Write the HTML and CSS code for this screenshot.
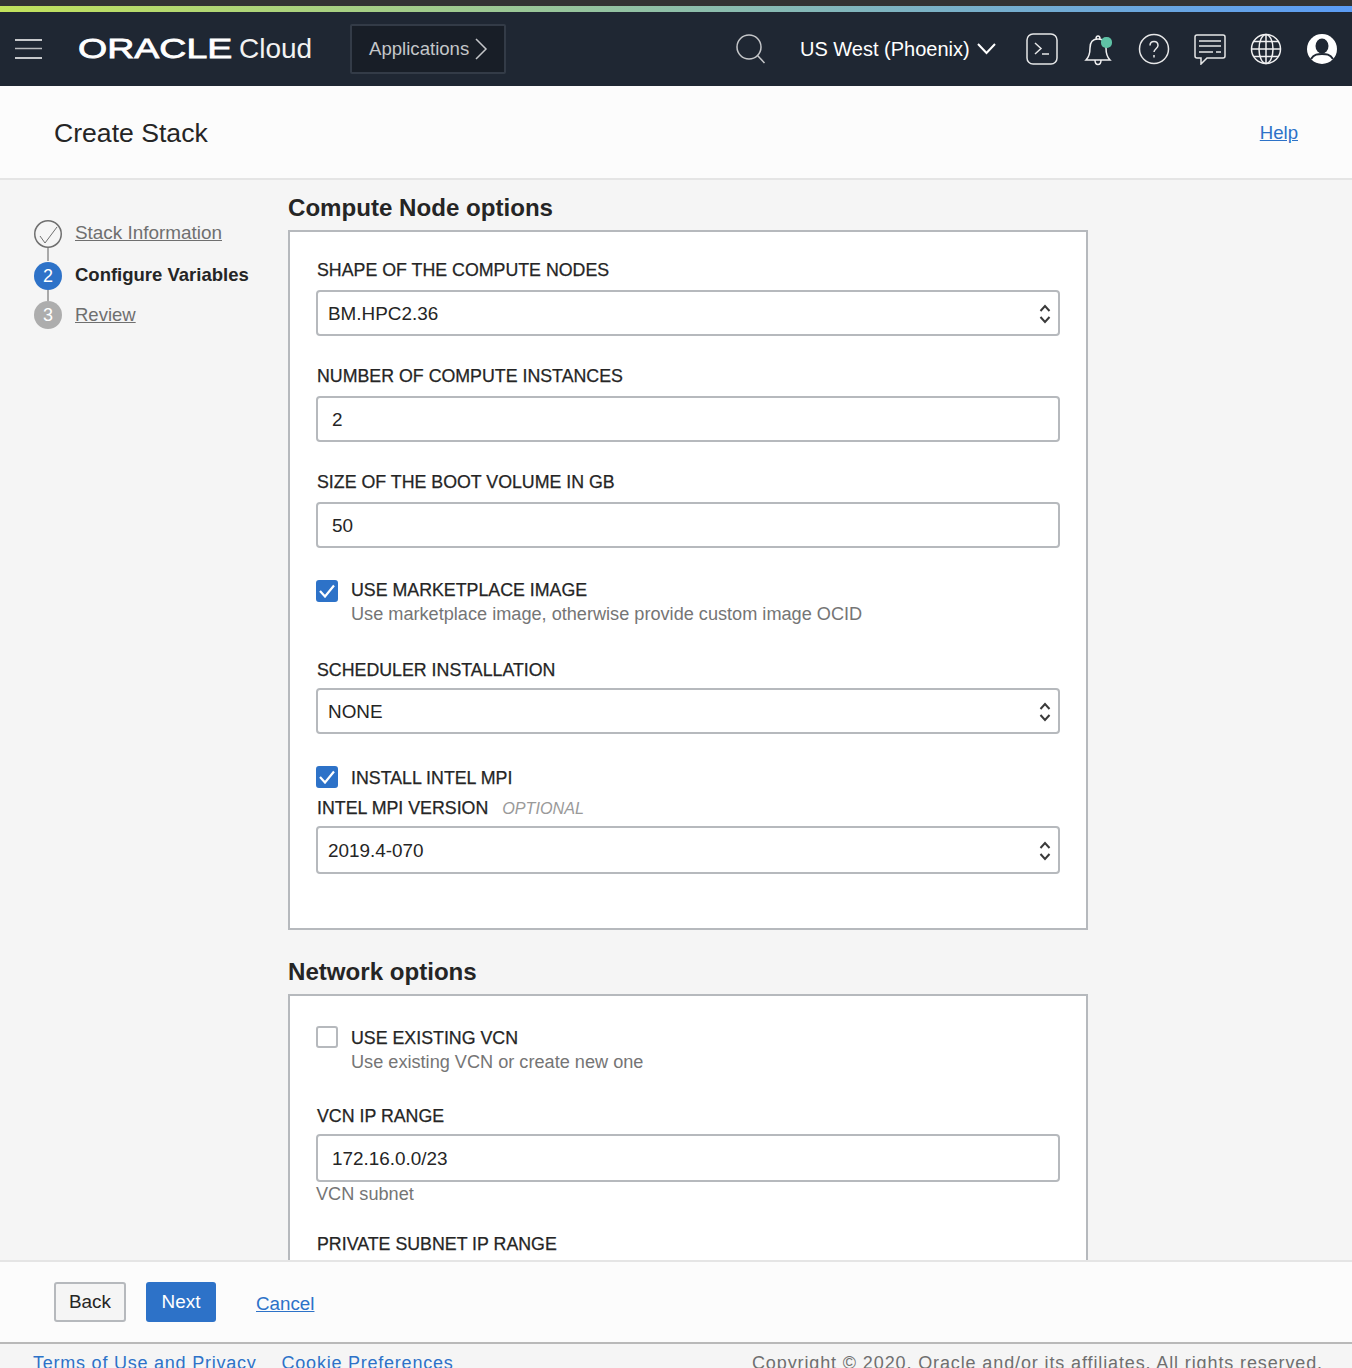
FILE: index.html
```html
<!DOCTYPE html>
<html lang="en">
<head>
  <meta charset="UTF-8">
  <title>Create Stack</title>
  <link rel="stylesheet" href="styles.css">
</head>
<body>

  <div class="top-strip"></div>

  <header class="navbar">
    <svg class="burger" width="27" height="20" viewBox="0 0 27 20">
      <path d="M0 1h27M0 19h27" stroke="#fff" stroke-width="1.5"/>
      <path d="M0 9.500h27" stroke="#b9bbbe" stroke-width="1.5"/>
    </svg>
    <div class="brand"><span class="brand-oracle">ORACLE</span><span class="brand-cloud">Cloud</span></div>
    <button class="apps-btn">Applications
      <svg width="13" height="22" viewBox="0 0 13 22"><path d="M1 1l10 10L1 21" fill="none" stroke="#c4c6c9" stroke-width="1.5"/></svg>
    </button>

    <svg class="nav-search" width="30" height="30" viewBox="0 0 30 30">
      <circle cx="13" cy="13" r="12" fill="none" stroke="#c4c6c9" stroke-width="1.5"/>
      <path d="M21.5 21.5l7 7.5" stroke="#c4c6c9" stroke-width="1.5"/>
    </svg>
    <div class="region">US West (Phoenix)
      <svg width="19" height="12" viewBox="0 0 19 12"><path d="M1 1l8.500 9L18 1" fill="none" stroke="#fff" stroke-width="2"/></svg>
    </div>
    <div class="nav-icons">
      <svg width="32" height="32" viewBox="0 0 32 32">
        <rect x="1" y="1" width="30" height="30" rx="6" fill="none" stroke="#e6e7e8" stroke-width="1.500"/>
        <path d="M9 10l6 5.500L9 21M16 21h7" fill="none" stroke="#e6e7e8" stroke-width="1.500"/>
      </svg>
      <svg class="nav-bell" width="30" height="34" viewBox="0 0 30 34">
        <path d="M2 28c3-3 4-6 4-12 0-6 3-9 8-9s8 3 8 9c0 6 1 9 4 12zM11 28c0 6 6 6 6 0M12 7c0-4 4-4 4 0" fill="none" stroke="#f0f0f1" stroke-width="1.500"/>
        <rect x="17" y="5" width="11" height="11" rx="5" fill="#5fc2a6"/>
      </svg>
      <svg width="32" height="32" viewBox="0 0 32 32">
        <circle cx="16" cy="16" r="14.500" fill="none" stroke="#e6e7e8" stroke-width="1.500"/>
        <path d="M12 12.500c0-5.500 8-5.500 8 0 0 3-4 3.500-4 6.500M16 22v2.500" fill="none" stroke="#e6e7e8" stroke-width="1.500"/>
      </svg>
      <svg width="32" height="32" viewBox="0 0 32 32">
        <path d="M3 2h26a2 2 0 0 1 2 2v19a2 2 0 0 1-2 2H13l-6 6v-6H3a2 2 0 0 1-2-2V4a2 2 0 0 1 2-2z" fill="none" stroke="#e6e7e8" stroke-width="1.500"/>
        <path d="M5 8h22M5 13h22M5 19h14M22 19h5" stroke="#e6e7e8" stroke-width="1.500"/>
      </svg>
      <svg width="32" height="32" viewBox="0 0 32 32">
        <g fill="none" stroke="#f0f0f1" stroke-width="1.500">
          <circle cx="16" cy="16" r="14.500"/>
          <ellipse cx="16" cy="16" rx="7" ry="14.500"/>
          <path d="M16 1.500v29M1.500 16h29M4 8.500h24M4 23.500h24"/>
        </g>
      </svg>
      <svg width="30" height="32" viewBox="0 0 30 32">
        <circle cx="15" cy="16" r="15" fill="#fff"/>
        <ellipse cx="15" cy="13" rx="6.500" ry="7.500" fill="#1f2733"/>
        <path d="M4 26c3-5 7-5 11-5s8 0 11 5" fill="none" stroke="#1f2733" stroke-width="2"/>
      </svg>
    </div>
  </header>

  <div class="title-bar">
    <h1>Create Stack</h1>
    <a class="help-link" href="#">Help</a>
  </div>

  <div class="main">
    <nav class="steps">
      <div class="step">
        <svg class="step-done" width="28" height="28" viewBox="0 0 28 28">
          <circle cx="14" cy="14" r="13.250" fill="none" stroke="#6f6f6f" stroke-width="1.500"/>
          <path d="M6 16l5 7L23 7" fill="none" stroke="#6f6f6f" stroke-width="1"/>
        </svg>
        <a class="step-first-link" href="#">Stack Information</a>
      </div>
      <div class="step step-current">
        <span class="step-num num-blue">2</span>
        <strong>Configure Variables</strong>
      </div>
      <div class="step step-last">
        <span class="step-num num-grey">3</span>
        <a href="#">Review</a>
      </div>
    </nav>

    <div class="content">
      <h2>Compute Node options</h2>
      <section class="card card-compute">
        <label>SHAPE OF THE COMPUTE NODES</label>
        <div class="select">BM.HPC2.36
          <svg width="12" height="20" viewBox="0 0 12 20"><path d="M1.500 7l4.500-5 4.500 5M1.500 13l4.500 5 4.500-5" fill="none" stroke="#3a3a3a" stroke-width="2"/></svg>
        </div>

        <label class="mt">NUMBER OF COMPUTE INSTANCES</label>
        <div class="input">2</div>

        <label class="mt">SIZE OF THE BOOT VOLUME IN GB</label>
        <div class="input">50</div>

        <div class="check-row row-marketplace">
          <span class="check on"><svg width="16" height="14" viewBox="0 0 16 14"><path d="M1 7l5 5.500L15 1.500" fill="none" stroke="#fff" stroke-width="2.200"/></svg></span>
          <div>
            <div class="check-label">USE MARKETPLACE IMAGE</div>
            <div class="hint">Use marketplace image, otherwise provide custom image OCID</div>
          </div>
        </div>

        <label class="label-sched">SCHEDULER INSTALLATION</label>
        <div class="select">NONE
          <svg width="12" height="20" viewBox="0 0 12 20"><path d="M1.500 7l4.500-5 4.500 5M1.500 13l4.500 5 4.500-5" fill="none" stroke="#3a3a3a" stroke-width="2"/></svg>
        </div>

        <div class="check-row row-mpi">
          <span class="check on check-up"><svg width="16" height="14" viewBox="0 0 16 14"><path d="M1 7l5 5.500L15 1.500" fill="none" stroke="#fff" stroke-width="2.200"/></svg></span>
          <div class="check-label">INSTALL INTEL MPI</div>
        </div>

        <label class="label-version">INTEL MPI VERSION <em>OPTIONAL</em></label>
        <div class="select select-tall">2019.4-070
          <svg width="12" height="20" viewBox="0 0 12 20"><path d="M1.500 7l4.500-5 4.500 5M1.500 13l4.500 5 4.500-5" fill="none" stroke="#3a3a3a" stroke-width="2"/></svg>
        </div>
      </section>

      <h2 class="h2-network">Network options</h2>
      <section class="card card-network">
        <div class="check-row row-vcn">
          <span class="check check-up"></span>
          <div>
            <div class="check-label">USE EXISTING VCN</div>
            <div class="hint">Use existing VCN or create new one</div>
          </div>
        </div>

        <label class="label-range">VCN IP RANGE</label>
        <div class="input input-range">172.16.0.0/23</div>
        <div class="hint hint-subnet">VCN subnet</div>

        <label class="label-private">PRIVATE SUBNET IP RANGE</label>
      </section>
    </div>
  </div>

  <div class="action-bar">
    <button class="btn btn-back">Back</button>
    <button class="btn btn-next">Next</button>
    <a class="cancel" href="#">Cancel</a>
  </div>

  <footer class="footer">
    <a href="#">Terms of Use and Privacy</a>
    <a href="#">Cookie Preferences</a>
    <span class="copyright">Copyright © 2020, Oracle and/or its affiliates. All rights reserved.</span>
  </footer>

</body>
</html>
```

FILE: styles.css
```css
* {
  box-sizing: border-box;
}
html, body {
  height: 100%;
}
body {
  margin: 0;
  height: 1368px;
  overflow: hidden;
  display: flex;
  flex-direction: column;
  font-family: "Liberation Sans", Arial, sans-serif;
  font-size: 18px;
  color: #252525;
  background-color: #f5f5f5;
}
a {
  color: #2d72c8;
}

.top-strip {
  flex: none;
  height: 12px;
  border-top: 6px solid #333;
  background: linear-gradient(to right, #c2e25c, #5b9cf5);
}

.navbar {
  flex: none;
  height: 74px;
  display: flex;
  align-items: center;
  background-color: #1f2733;
  color: #fff;
}
.burger {
  margin-left: 15px;
}
.brand {
  width: 272px;
  margin-left: 36px;
  display: flex;
  align-items: center;
  white-space: nowrap;
}
.brand-oracle {
  display: inline-block;
  width: 161px;
  font-size: 28px;
  -webkit-text-stroke: 0.8px #fff;
  transform: scaleX(1.34);
  transform-origin: left center;
}
.brand-cloud {
  font-size: 28px;
  color: #f2f2f2;
}
.apps-btn {
  width: 156px;
  height: 50px;
  padding: 0 0 0 17px;
  display: flex;
  align-items: center;
  gap: 6px;
  font-family: inherit;
  font-size: 18.600px;
  color: #c4c6c9;
  background-color: #181e27;
  border: 2px solid #333b47;
  border-radius: 2px;
}
.nav-search {
  margin-left: 230px;
}
.region {
  width: 214px;
  margin-left: 34px;
  display: flex;
  align-items: center;
  gap: 7px;
  font-size: 20px;
}
.nav-icons {
  display: grid;
  grid-template-columns: repeat(6, 56px);
  align-items: center;
  justify-items: center;
}
.nav-bell {
  margin-left: 1px;
}

.title-bar {
  flex: none;
  height: 94px;
  padding: 2px 54px 0 54px;
  display: flex;
  align-items: center;
  justify-content: space-between;
  background-color: #fcfcfc;
  border-bottom: 2px solid #e5e5e5;
}
.title-bar h1 {
  margin: 0;
  font-size: 26.600px;
  font-weight: normal;
}
.help-link {
  font-size: 18.600px;
}

.main {
  flex: 1;
  min-height: 0;
  overflow: hidden;
  display: flex;
}
.steps {
  flex: none;
  width: 288px;
  padding: 40px 0 0 34px;
}
.step {
  position: relative;
  height: 41px;
  display: flex;
  align-items: flex-start;
  gap: 13px;
  font-size: 18.500px;
  line-height: 26px;
}
.step a {
  color: #6f6f6f;
}
.step .step-first-link {
  font-size: 18.900px;
}
.step::after {
  content: "";
  position: absolute;
  left: 13px;
  top: 28px;
  width: 2px;
  height: 13px;
  background-color: #a9a9a9;
}
.step-last::after {
  display: none;
}
.step-current {
  height: 39px;
  margin-top: 1px;
}
.step-current::after {
  height: 11px;
}
.step-last {
  line-height: 28px;
}
.step-num {
  width: 28px;
  height: 28px;
  border-radius: 50%;
  flex: none;
  text-align: center;
  color: #fff;
  font-size: 18px;
  line-height: 28px;
}
.num-blue {
  background-color: #2d72c8;
}
.num-grey {
  background-color: #adadad;
}

.content {
  flex: none;
  width: 800px;
}
.content h2 {
  margin: 0;
  height: 50px;
  padding-top: 12px;
  font-size: 24.100px;
  line-height: 32px;
  font-weight: bold;
}
.content .h2-network {
  height: 64px;
  padding-top: 26px;
}
.card {
  padding: 28px 26px 0;
  background-color: #fff;
  border: 2px solid #b6b9bd;
}
.card-compute {
  height: 700px;
}
.card-network {
  height: 400px;
  padding-top: 32px;
}
.card label,
.check-label {
  display: block;
  padding-left: 1px;
  font-size: 17.800px;
  line-height: 20px;
  color: #252525;
  -webkit-text-stroke: 0.25px #252525;
}
.check-label {
  padding-left: 0;
}
.card .mt {
  margin-top: 30px;
}
.card .label-sched {
  margin-top: 36px;
}
.card .label-version {
  margin-top: 10px;
  margin-bottom: -2px;
}
.card label em {
  margin-left: 9px;
  font-size: 16.200px;
  color: #9a9a9a;
  -webkit-text-stroke: 0;
}
.select, .input {
  margin-top: 10px;
  height: 46px;
  padding-top: 1px;
  display: flex;
  align-items: center;
  justify-content: space-between;
  background-color: #fff;
  border: 2px solid #b6b9bd;
  border-radius: 4px;
  font-size: 18.900px;
}
.select {
  padding-left: 10px;
  padding-right: 7px;
}
.input {
  padding-left: 14px;
  padding-right: 14px;
}
.select-tall {
  height: 48px;
  padding-top: 2px;
}
.label-sched + .select {
  margin-top: 8px;
}
.check-row {
  display: flex;
  align-items: flex-start;
  gap: 13px;
}
.row-marketplace {
  margin-top: 32px;
}
.row-mpi {
  margin-top: 34px;
}
.check {
  flex: none;
  width: 22px;
  height: 22px;
  display: flex;
  align-items: center;
  justify-content: center;
  border: 2px solid #b6b9bd;
  border-radius: 3px;
  background-color: #fff;
}
.check-up {
  margin-top: -2px;
}
.check.on {
  background-color: #2d72c8;
  border-color: #2d72c8;
}
.hint {
  margin-top: 4px;
  font-size: 18.150px;
  line-height: 20px;
  color: #757575;
}
.card .label-range {
  margin-top: 34px;
}
.input-range {
  margin-top: 8px;
  height: 48px;
  padding-top: 2px;
}
.hint-subnet {
  margin-top: 2px;
}
.card .label-private {
  margin-top: 30px;
}

.action-bar {
  flex: none;
  height: 84px;
  padding-left: 54px;
  display: flex;
  align-items: center;
  background-color: #fcfcfc;
  border-top: 2px solid #e5e5e5;
  border-bottom: 2px solid #b9b9b9;
}
.btn {
  height: 40px;
  font-family: inherit;
  font-size: 18.900px;
  border-radius: 3px;
}
.btn-back {
  width: 72px;
  color: #252525;
  background-color: #f5f5f5;
  border: 2px solid #b6b9bd;
}
.btn-next {
  width: 70px;
  margin-left: 20px;
  color: #fff;
  background-color: #2d72c8;
  border: none;
}
.cancel {
  margin-left: 40px;
  padding-top: 4px;
  font-size: 18.800px;
}

.footer {
  flex: none;
  height: 24px;
  padding: 8px 29px 0 33px;
  display: flex;
  gap: 25px;
  font-size: 18px;
  line-height: 22px;
  letter-spacing: 0.77px;
  white-space: nowrap;
  overflow: hidden;
  background-color: #f5f5f5;
}
.copyright {
  margin-left: auto;
  letter-spacing: 0.88px;
  color: #6f6f6f;
}
```
